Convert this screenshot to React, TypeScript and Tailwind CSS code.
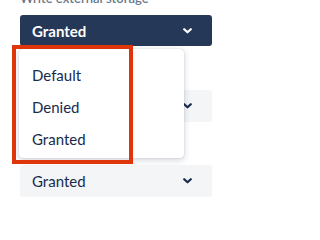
import React from "react";

const font = { fontFamily: "Lato, 'Noto Sans', sans-serif" };

function Chevron({ className }: { className?: string }) {
  return (
    <svg
      width="9"
      height="6"
      viewBox="0 0 9 6"
      fill="none"
      className={className}
    >
      <path
        d="M1.2 1.2 L4.5 4.3 L7.8 1.2"
        stroke="currentColor"
        strokeWidth="2.2"
        strokeLinecap="round"
        strokeLinejoin="round"
      />
    </svg>
  );
}

function Select({ value, dark }: { value: string; dark?: boolean }) {
  return (
    <div
      className={`flex items-center justify-between pl-3 pr-5 rounded-[3px] ${
        dark
          ? "h-[31px] bg-[#253858] text-white font-bold"
          : "h-8 bg-[#f4f5f7] text-[#172b4d]"
      }`}
    >
      <span className="text-[15px] leading-5">{value}</span>
      <Chevron className={dark ? "text-white" : "text-[#172b4d]"} />
    </div>
  );
}

export default function App() {
  const options = ["Default", "Denied", "Granted"];

  return (
    <div
      className="relative w-[223px] h-[201px] overflow-hidden bg-white"
      style={font}
    >
      <div className="flex flex-col pl-5 pr-[11px]">
        <span className="text-[13px] leading-4 font-semibold text-[#6b778c] mt-[-10px] mb-[9px] whitespace-nowrap">
          Write external storage
        </span>
        <Select value="Granted" dark />
        <div className="mt-[44px]">
          <Select value="Granted" />
        </div>
        <div className="mt-[43px]">
          <Select value="Granted" />
        </div>
      </div>

      {/* open dropdown menu */}
      <div className="absolute left-[19px] top-[49px] w-[165px] h-[109px] bg-white rounded-[4px] shadow-[0_2px_6px_rgba(9,30,66,0.2),0_0_1px_rgba(9,30,66,0.3)] pt-[10px]">
        {options.map((o) => (
          <div
            key={o}
            className="h-8 flex items-center pl-[13px] text-[15px] text-[#172b4d]"
          >
            {o}
          </div>
        ))}
      </div>

      {/* highlight annotation */}
      <div className="absolute left-[12px] top-[45px] w-[121px] h-[119px] border-[4px] border-[#de350b]" />
    </div>
  );
}
